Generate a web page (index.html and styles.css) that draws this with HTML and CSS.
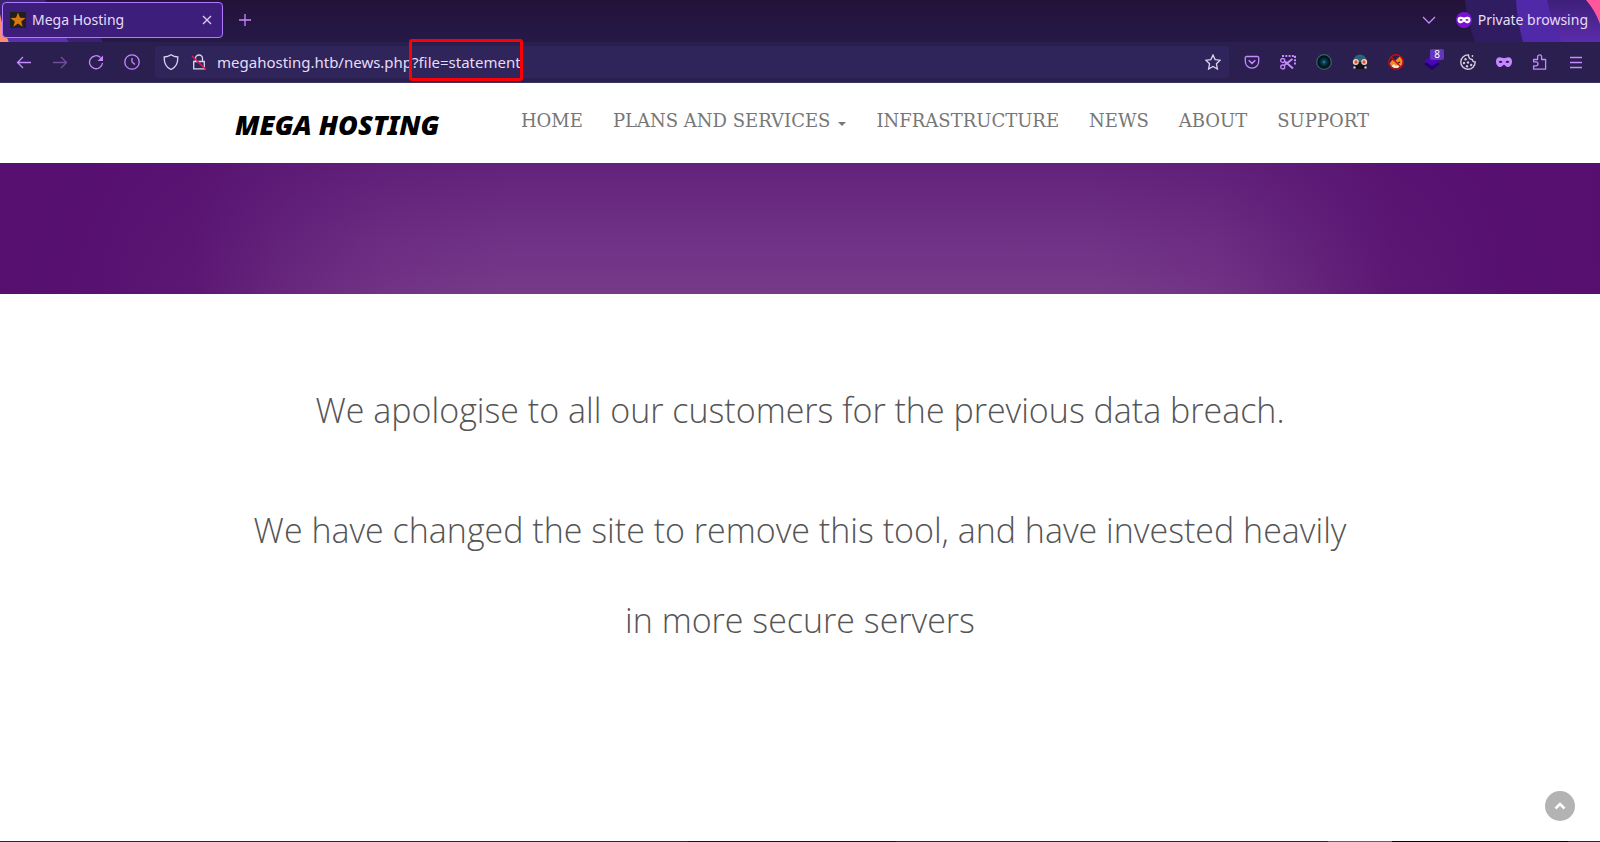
FILE: index.html
```html
<!DOCTYPE html>
<html lang="en">
<head>
<meta charset="utf-8">
<title>Mega Hosting</title>
<link rel="stylesheet" href="styles.css">
</head>
<body>
<div class="chrome">
  <div class="tabstrip">
    <svg class="theme theme-left" viewBox="0 0 110 42" aria-hidden="true">
      <path d="M0 0H45L69 42H0Z" fill="#3a2470"/>
      <path d="M0 14C2 24 5 33 9 42H0Z" fill="#ff8c72"/>
      <path d="M7 37H66L69 42H9Z" fill="#5b2fb0"/>
      <path d="M66 37H100L103 42H69Z" fill="#3c2074"/>
    </svg>
    <svg class="theme theme-right" viewBox="0 0 140 42" aria-hidden="true">
      <defs><linearGradient id="glow" x1="0" y1="0" x2="0" y2="1"><stop offset="0" stop-color="#3e1f7a"/><stop offset="1" stop-color="#5b2cab"/></linearGradient></defs>
      <path d="M5 0H140V42H15Q7 20 5 0Z" fill="#301c60"/>
      <path d="M56 0H140V42H63Q57 20 56 0Z" fill="#5029a8"/>
      <path d="M87 0H140V42H102Q91 20 87 0Z" fill="url(#glow)"/>
      <path d="M126 0H140V24Q135 10 126 0Z" fill="#ff569c"/>
    </svg>
    <div class="tab">
      <svg class="favicon" viewBox="0 0 16 16" aria-hidden="true"><path fill="#20211f" d="M0 0h16v16H0z"/><path fill="#d9780f" d="M8 .6l2 5.200 5.600.2-4.400 3.400 1.500 5.300L8 11.600l-4.700 3.100 1.500-5.300L.4 6l5.600-.2z"/></svg>
      <span class="tab-title">Mega Hosting</span>
      <button class="icon-btn tab-close" aria-label="Close tab"><svg viewBox="0 0 16 16"><path d="M4 4l8 8M12 4l-8 8" stroke="#dccff5"/></svg></button>
    </div>
    <button class="icon-btn new-tab" aria-label="New tab"><svg viewBox="0 0 16 16"><path d="M8 2v12M2 8h12"/></svg></button>
    <div class="window-side">
      <button class="icon-btn" aria-label="List all tabs"><svg viewBox="0 0 16 16"><path d="M2 5l6 6 6-6"/></svg></button>
      <div class="private">
        <svg viewBox="0 0 16 16" aria-hidden="true"><circle cx="8" cy="8" r="8" fill="#7a12d4"/><path fill="#fff" fill-rule="evenodd" d="M1.500 7.700C1.500 4.600 4 4.300 6 5.100Q8 6 10 5.100C12 4.300 14.500 4.600 14.500 7.700C14.500 10.300 12.800 11.300 11 11.300C9.500 11.300 9 9.800 8 9.800C7 9.800 6.500 11.300 5 11.300C3.200 11.300 1.500 10.300 1.500 7.700ZM3.300 8q1.700-1.800 3.400 0q-1.700 1.700-3.400 0ZM9.300 8q1.700-1.800 3.400 0q-1.700 1.700-3.400 0Z"/></svg>
        <span>Private browsing</span>
      </div>
    </div>
  </div>
  <div class="toolbar">
    <div class="nav-buttons">
      <button class="icon-btn" aria-label="Back"><svg viewBox="0 0 16 16"><path d="M15 8.500H1.500M7 3L1.500 8.500L7 14"/></svg></button>
      <button class="icon-btn dim" aria-label="Forward"><svg viewBox="0 0 16 16"><path d="M1 8.500h13.500M9 3l5.500 5.500L9 14"/></svg></button>
      <button class="icon-btn" aria-label="Reload"><svg viewBox="0 0 16 16"><path d="M12.500 3.500A6.500 6.500 0 1 0 14.500 9"/><path d="M15 1.500V7H9.500z" fill="#c689ff" stroke="none"/></svg></button>
      <button class="icon-btn" aria-label="History"><svg viewBox="0 0 16 16"><circle cx="8" cy="8" r="7.200"/><path d="M8 4v4l3 2.500"/></svg></button>
    </div>
    <div class="urlbar">
      <svg viewBox="0 0 16 16" aria-hidden="true"><path d="M8 .8Q11 3 14.800 3C15 9 13 13.500 8 15.500C3 13.500 1 9 1.200 3Q5 3 8 .8Z"/></svg>
      <svg viewBox="0 0 16 16" aria-hidden="true"><path d="M2.700 7.500h10.600v7.300H2.700zM4.500 7.500V4.500a3.500 3.500 0 0 1 7 0v3"/><path d="M1 2l14 13.500" stroke="#e3184a" stroke-width="1.600"/></svg>
      <div class="address">
        <input type="text" aria-label="Address" value="megahosting.htb/news.php?file=statement">
        <span class="marker"></span>
      </div>
      <button class="icon-btn bookmark" aria-label="Bookmark this page"><svg viewBox="0 0 16 16"><path d="M8 1l2.100 4.600 5 .6-3.700 3.500 1 5.300L8 12.400 3.600 15l1-5.300L.9 6.200l5-.6z"/></svg></button>
    </div>
    <div class="extensions">
      <button class="icon-btn" aria-label="Pocket"><svg viewBox="0 0 16 16"><path d="M2.500 2.500h11a1.200 1.200 0 0 1 1.200 1.200V7.500a6.700 6.700 0 0 1-13.400 0V3.700a1.200 1.200 0 0 1 1.200-1.200z"/><path d="M4.700 6.200L8 9.400l3.300-3.200" stroke-width="1.500"/></svg></button>
      <button class="icon-btn" aria-label="Screenshot"><svg viewBox="0 0 16 16"><path d="M2 2H15.500M15 2V12" stroke-width="2" stroke-dasharray="2 1.300"/><path d="M4.500 11L12.500 5M5 7.500L13 14.500" stroke-width="2"/><circle cx="2.700" cy="6.500" r="2"/><circle cx="2.700" cy="13" r="2"/></svg></button>
      <button class="icon-btn" aria-label="Lens extension"><svg viewBox="0 0 16 16"><defs><radialGradient id="lens"><stop offset="0" stop-color="#2a93b5"/><stop offset=".25" stop-color="#0a4258"/><stop offset=".7" stop-color="#04161f"/><stop offset="1" stop-color="#020d14"/></radialGradient></defs><circle cx="8" cy="8" r="7.300" fill="url(#lens)" stroke="#35616a"/></svg></button>
      <button class="icon-btn" aria-label="Agent extension"><svg viewBox="0 0 16 16" stroke="none"><path d="M1.500 7Q2 .5 8 .5t6.500 6.500l-2 8h-9z" fill="#2b6474"/><path d="M3 8h10l1 7H2z" fill="#10131c"/><circle cx="3.800" cy="8" r="3" fill="#f5d3c2"/><circle cx="12.200" cy="8" r="3" fill="#f5d3c2"/><circle cx="4" cy="8" r="1.700" fill="#df503d"/><circle cx="12" cy="8" r="1.700" fill="#df503d"/><path d="M1.500 12.500h2v2h-2zM12.500 12.500h2v2h-2z" fill="#f1e4d5"/></svg></button>
      <button class="icon-btn" aria-label="Proxy extension"><svg viewBox="0 0 16 16"><path d="M1.500 10L4 6l3 1 5-5 3 5-1 5-6 1-4-1z" fill="#ef8b22" stroke="none"/><path d="M3 12l3-2 2 2 3-2 2 1-3 3H6z" fill="#f7e6d1" stroke="none"/><path d="M10 9l2-1" stroke="#392023"/><circle cx="8" cy="8" r="7.200" stroke="#c40c15" stroke-width="1.400"/><path d="M3 3l10 10" stroke="#c40c15" stroke-width="1.400"/></svg></button>
      <button class="icon-btn layers" aria-label="Layers extension"><svg viewBox="0 0 16 16" stroke="none"><path d="M0 10l8-5 8 5-8 6z" fill="#210071"/><path d="M0 7l8-5 8 5-8 5z" fill="#4b05b5"/></svg><span class="badge">8</span></button>
      <button class="icon-btn" aria-label="Cookie extension"><svg viewBox="0 0 16 16"><g stroke="#d0cbd9"><path d="M8.500 .9A7.200 7.200 0 1 0 15.200 8Q12.500 8 12.300 5.500Q8.500 5 8.500 .9Z" stroke-width="1.400"/></g><g fill="#d0cbd9" stroke="none"><circle cx="5.500" cy="5.300" r="1.200"/><circle cx="4" cy="9" r="1.200"/><circle cx="8" cy="8.500" r="1.200"/><circle cx="7" cy="12.300" r="1.200"/><circle cx="11.200" cy="11" r="1.200"/><circle cx="12.500" cy="2" r=".9"/></g></svg></button>
      <button class="icon-btn" aria-label="Private mode"><svg viewBox="0 0 16 16" stroke="none"><path fill="#c689ff" fill-rule="evenodd" d="M0 7.500C0 3 3.500 2.500 6 3.700Q8 4.600 10 3.700C12.500 2.500 16 3 16 7.500C16 11 14 13 11.500 13C9.600 13 9 10.800 8 10.800C7 10.800 6.400 13 4.500 13C2 13 0 11 0 7.500ZM2.500 8q1.900-2.300 4.200 0q-2 2-4.200 0ZM9.300 8q2.300-2.300 4.200 0q-2.200 2-4.200 0Z"/></svg></button>
      <button class="icon-btn" aria-label="Extensions"><svg viewBox="0 0 16 16"><path d="M1.600 5.500H5.600V2.800a2 2 0 0 1 4 0V5.500H13.600V15.200H1.600V11.800H4a2 2 0 0 0 0-4H1.600z" stroke-linejoin="round"/></svg></button>
      <button class="icon-btn" aria-label="Menu"><svg viewBox="0 0 16 16"><path d="M2 3.500h12M2 8.500h12M2 13.500h12"/></svg></button>
    </div>
  </div>
</div>

<header class="site-header">
  <div class="container">
    <a class="logo" href="#">MEGA HOSTING</a>
    <nav class="menu">
      <a href="#">HOME</a>
      <a href="#">PLANS AND SERVICES <span class="caret"></span></a>
      <a href="#">INFRASTRUCTURE</a>
      <a href="#">NEWS</a>
      <a href="#">ABOUT</a>
      <a href="#">SUPPORT</a>
    </nav>
  </div>
</header>
<div class="banner"></div>
<main class="statement">
  <p>We apologise to all our customers for the previous data breach.</p>
  <p>We have changed the site to remove this tool, and have invested heavily in more secure servers</p>
</main>
<button class="to-top" aria-label="Back to top"><svg viewBox="0 0 12 12"><path d="M1.500 8.500L6 4l4.500 4.500"/></svg></button>
<footer class="desktop-edge"></footer>
</body>
</html>
```
FILE: styles.css
```css
* { box-sizing: border-box; }
body {
  margin: 0;
  min-height: 100vh;
  display: flex;
  flex-direction: column;
  background: #fff;
  font-family: "Open Sans", sans-serif;
}
button { border: 0; padding: 0; background: none; cursor: pointer; }
a { text-decoration: none; }

/* Browser window */
.chrome { font: 14px/20px "Noto Sans", sans-serif; color: #e6dcf7; }
.chrome svg { display: block; width: 16px; height: 16px; fill: none; }
.icon-btn { display: grid; place-items: center; flex: none; width: 16px; height: 16px; stroke: #c689ff; stroke-width: 1.3; }
.dim { opacity: .45; }
.tabstrip {
  position: relative;
  display: flex;
  align-items: center;
  height: 42px;
  padding: 0 12px 2px 2px;
  background: linear-gradient(#241239, #251947);
}
.chrome .theme { position: absolute; top: 0; height: 42px; }
.chrome .theme-left { left: 0; width: 110px; }
.chrome .theme-right { right: 0; width: 140px; }
.tab {
  position: relative;
  display: flex;
  align-items: center;
  gap: 6px;
  width: 221px;
  height: 36px;
  padding: 0 7px;
  border: 1px solid #b07bff;
  border-radius: 4px;
  background: #3d1f7b;
}
.tab-title { flex: 1; }
.new-tab { margin-left: 14px; }
.window-side { position: relative; display: flex; align-items: center; gap: 19px; margin-left: auto; }
.private { display: flex; align-items: center; gap: 6px; }
.toolbar {
  display: flex;
  align-items: center;
  height: 41px;
  padding: 0 16px;
  background: #2a1f4f;
  border-bottom: 1px solid #3c3163;
}
.nav-buttons { display: flex; gap: 20px; }
.urlbar {
  display: flex;
  align-items: center;
  flex: 1;
  gap: 12px;
  height: 32px;
  margin: 0 15px;
  padding: 0 8px;
  border-radius: 4px;
  background: #2f255b;
  stroke: #ded4f0;
  stroke-width: 1.3;
}
.address { position: relative; flex: 1; margin-left: -2px; }
.address input {
  display: block;
  width: 100%;
  padding: 0;
  border: 0;
  outline: 0;
  background: none;
  color: #e6dcf7;
  font: 15px/20px "Noto Sans", sans-serif;
}
.marker {
  position: absolute;
  left: 192px;
  top: -13px;
  width: 114px;
  height: 42px;
  border: 3px solid #fb0007;
  border-radius: 3px;
}
.bookmark { stroke: #ded4f0; }
.extensions { display: flex; gap: 20px; }
.layers { position: relative; }
.badge {
  position: absolute;
  right: -4px;
  top: -5px;
  width: 14px;
  border-radius: 2px;
  background: #6535bd;
  color: #fff;
  font: 10px/11px "Noto Sans", sans-serif;
  text-align: center;
}

/* Site */
.container {
  display: flex;
  justify-content: space-between;
  max-width: 1170px;
  height: 80px;
  margin: 0 auto;
  padding: 0 16px 0 20px;
}
.logo {
  padding-top: 25px;
  color: #000;
  font: italic 900 27px/34px "Noto Sans", sans-serif;
}
.menu { display: flex; gap: 30px; padding-top: 26px; }
.menu a {
  display: flex;
  align-items: center;
  height: 24px;
  color: #777;
  font: 18px/24px "DejaVu Serif", serif;
}
.caret {
  margin: 5px 0 0 8px;
  border-top: 4px solid #777;
  border-left: 4px solid transparent;
  border-right: 4px solid transparent;
}
.banner {
  height: 131px;
  background:
    linear-gradient(90deg, #560f6f, #560f6ff0 6%, #560f6fd0 12%, #560f6f70 18%, #560f6f28 24%, #560f6f00 32%, #560f6f00 68%, #560f6f28 76%, #560f6f70 81%, #560f6fd0 87%, #560f6ff5 94%, #560f6f),
    linear-gradient(#62227b, #6e3185 55%, #773a88);
}
.statement {
  flex: 1;
  width: 100%;
  max-width: 1140px;
  margin: 0 auto;
  padding: 71px 15px 0;
  color: #555;
  font-size: 34px;
  font-weight: 300;
  line-height: 90px;
  text-align: center;
}
.statement p { margin: 0 0 30px; }
.to-top {
  position: fixed;
  right: 25px;
  bottom: 21px;
  display: grid;
  place-items: center;
  width: 30px;
  height: 30px;
  border-radius: 50%;
  background: #b3b3b3;
}
.to-top svg { width: 12px; height: 12px; fill: none; stroke: #fff; stroke-width: 2.5; }
.desktop-edge {
  height: 1px;
  background: linear-gradient(90deg, #2b2a33 43%, #131217 43% 56%, #2b2a33 56% 83%, #3b6ea5 83% 87%, #000 87% 98%, #2b2a33 98%);
}
```
